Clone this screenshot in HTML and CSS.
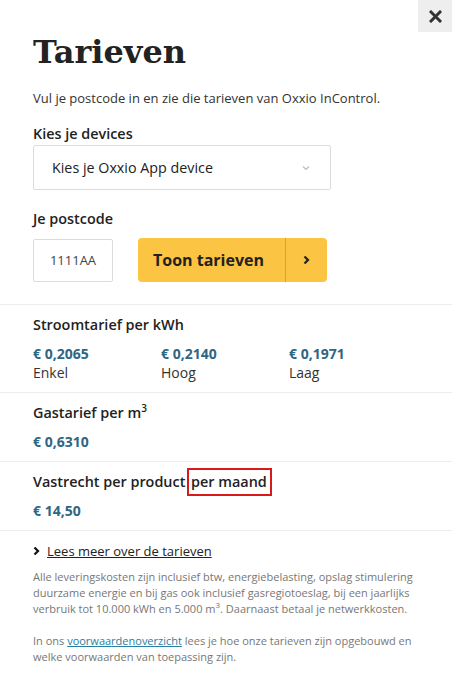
FILE: index.html
```html
<!DOCTYPE html>
<html lang="nl">
<head>
<meta charset="utf-8">
<title>Tarieven</title>
<link rel="stylesheet" href="styles.css">
</head>
<body>
<div class="panel">
  <button class="close" aria-label="Sluiten">
    <svg width="13" height="13" viewBox="0 0 13 13"><path d="M2 2L11 11M11 2L2 11" stroke="#333" stroke-width="3" stroke-linecap="square"/></svg>
  </button>
  <div class="top">
    <h1 class="title">Tarieven</h1>
    <p class="intro">Vul je postcode in en zie die tarieven van Oxxio InControl.</p>
    <label class="label">Kies je devices</label>
    <div class="select">
      <span>Kies je Oxxio App device</span>
      <svg class="sel-arrow" width="8" height="6" viewBox="0 0 8 6"><path d="M1 1.5L4 4.5L7 1.5" stroke="#bbb" stroke-width="1.2" fill="none"/></svg>
    </div>
    <label class="label label-post">Je postcode</label>
    <div class="row">
      <div class="input">1111AA</div>
      <button class="btn">
        <span class="btn-text">Toon tarieven</span>
        <span class="btn-icon"><svg width="7" height="10" viewBox="0 0 7 10"><path d="M1.5 1.5L5 5L1.5 8.5" stroke="#222" stroke-width="2.2" fill="none"/></svg></span>
      </button>
    </div>
  </div>
  <section class="block">
    <h2 class="bh">Stroomtarief per kWh</h2>
    <div class="cols">
      <div><div class="price">€ 0,2065</div><div class="sub">Enkel</div></div>
      <div><div class="price">€ 0,2140</div><div class="sub">Hoog</div></div>
      <div><div class="price">€ 0,1971</div><div class="sub">Laag</div></div>
    </div>
  </section>
  <section class="block">
    <h2 class="bh">Gastarief per m<sup>3</sup></h2>
    <div class="price price-gap">€ 0,6310</div>
  </section>
  <section class="block">
    <h2 class="bh">Vastrecht per product <span class="mark">per maand</span></h2>
    <div class="price price-gap">€ 14,50</div>
  </section>
  <div class="foot">
    <a class="more" href="#"><svg width="7" height="10" viewBox="0 0 7 10"><path d="M1.5 1.5L5 5L1.5 8.5" stroke="#111" stroke-width="2.2" fill="none"/></svg><span>Lees meer over de tarieven</span></a>
    <p class="small">Alle leveringskosten zijn inclusief btw, energiebelasting, opslag stimulering duurzame energie en bij gas ook inclusief gasregiotoeslag, bij een jaarlijks verbruik tot 10.000 kWh en 5.000 m<sup>3</sup>. Daarnaast betaal je netwerkkosten.</p>
    <p class="small">In ons <a href="#" class="link">voorwaardenoverzicht</a> lees je hoe onze tarieven zijn opgebouwd en welke voorwaarden van toepassing zijn.</p>
  </div>
</div>
</body>
</html>
```
FILE: styles.css
```css
* { box-sizing: border-box; }
html, body { margin: 0; padding: 0; background: #fff; }
body { font-family: "Open Sans", "Liberation Sans", sans-serif; color: #333; }
.panel { position: relative; width: 452px; min-height: 688px; }
.close {
  position: absolute; top: 0; right: 0; width: 34px; height: 32px;
  background: #eeeeee; border: 0; padding: 0; display: flex; align-items: center; justify-content: center;
}
.top { padding: 30px 33px 22px; }
.title {
  margin: 0; font-family: "DejaVu Serif", serif; font-weight: bold; font-size: 32px;
  line-height: 44px; color: #222; letter-spacing: 0;
}
.intro { margin: 15px 0 0; font-size: 13px; line-height: 18px; color: #333; }
.label { display: block; font-weight: 600; font-size: 14.4px; line-height: 20px; margin-top: 17px; color: #222; }
.label-post { margin-top: 19px; }
.select {
  margin-top: 1px; width: 298px; height: 45px; border: 1px solid #dcdcdc; border-radius: 2px;
  display: flex; align-items: center; justify-content: space-between; padding: 0 20px 0 18px;
  font-size: 14.3px; color: #222;
}
.row { display: flex; align-items: center; gap: 25px; margin-top: 9px; }
.input {
  width: 80px; height: 43px; border: 1px solid #dcdcdc; border-radius: 2px;
  display: flex; align-items: center; justify-content: center; font-size: 13px; color: #444;
}
.btn {
  display: flex; height: 44px; width: 189px; padding: 0; border: 0; border-radius: 4px;
  background: #fbc443; font-family: inherit; color: #222; align-items: stretch;
}
.btn-text { flex: 1; display: flex; align-items: center; justify-content: center; font-weight: 700; font-size: 16px; padding-right: 6px; }
.btn-icon { width: 42px; border-left: 1px solid #d9a22c; display: flex; align-items: center; justify-content: center; }
.block { border-top: 1px solid #ececec; padding: 10px 33px 10px; }
.bh { margin: 0; font-size: 14.4px; font-weight: 600; line-height: 20px; color: #222; }
.bh sup { font-size: 10px; line-height: 0; }
.cols { display: grid; grid-template-columns: 128px 128px 1fr; margin-top: 9px; }
.price { font-size: 14px; font-weight: 700; color: #2e6683; line-height: 19px; }
.price-gap { margin-top: 9px; }
.sub { font-size: 14px; line-height: 19px; color: #333; }
.mark { outline: 2px solid #d91a1a; outline-offset: 0; padding: 2px 3px 3px 2px; }
.foot { border-top: 1px solid #ececec; padding: 11px 33px 20px; }
.more { display: flex; align-items: center; gap: 7px; color: #222; font-size: 13px; text-decoration: none; line-height: 18px; }
.more span { text-decoration: underline; }
.small { margin: 9px 0 0; font-size: 11px; line-height: 16px; color: #777; }
.small + .small { margin-top: 16px; }
.small sup { font-size: 8px; line-height: 0; }
.link { color: #2a7ea0; text-decoration: underline; }
```
